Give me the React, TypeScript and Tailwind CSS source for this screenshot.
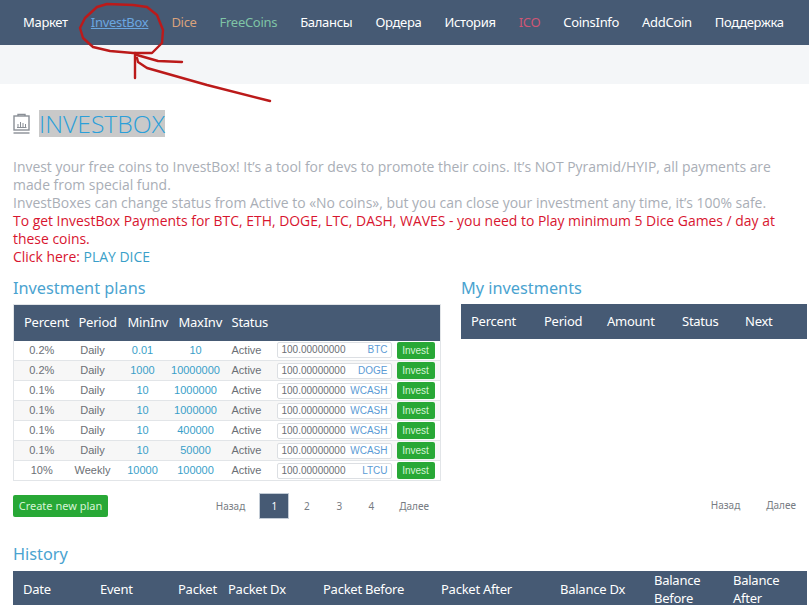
const ptFont = "font-['Noto_Sans',sans-serif]"

const navItems = [
  { label: 'Маркет', color: 'text-white' },
  { label: 'InvestBox', color: 'text-[#6aa6e0] underline' },
  { label: 'Dice', color: 'text-[#d9a27c]' },
  { label: 'FreeCoins', color: 'text-[#7fc4a6]' },
  { label: 'Балансы', color: 'text-white' },
  { label: 'Ордера', color: 'text-white' },
  { label: 'История', color: 'text-white' },
  { label: 'ICO', color: 'text-[#cf5674]' },
  { label: 'CoinsInfo', color: 'text-white' },
  { label: 'AddCoin', color: 'text-white' },
  { label: 'Поддержка', color: 'text-white' },
]

const plans = [
  { percent: '0.2%', period: 'Daily', min: '0.01', max: '10', coin: 'BTC' },
  { percent: '0.2%', period: 'Daily', min: '1000', max: '10000000', coin: 'DOGE' },
  { percent: '0.1%', period: 'Daily', min: '10', max: '1000000', coin: 'WCASH' },
  { percent: '0.1%', period: 'Daily', min: '10', max: '1000000', coin: 'WCASH' },
  { percent: '0.1%', period: 'Daily', min: '10', max: '400000', coin: 'WCASH' },
  { percent: '0.1%', period: 'Daily', min: '10', max: '50000', coin: 'WCASH' },
  { percent: '10%', period: 'Weekly', min: '10000', max: '100000', coin: 'LTCU' },
]

function SectionTitle({ children }: { children: string }) {
  return <h2 className={`${ptFont} text-[16.3px] leading-[24px] text-[#4aa3d0]`}>{children}</h2>
}

function Annotation() {
  return (
    <svg className="absolute left-0 top-0 pointer-events-none" width="300" height="110" viewBox="0 0 300 110" fill="none">
      <g stroke="#bb1a1a" strokeWidth="2.4" strokeLinecap="round" strokeLinejoin="round">
        <path d="M97 7 L107 4 L133 5 L147 7 L157 15 L163 30 L162 43 L152 53 L133 53 L110 51 L93 47 L83 38 L80 28 L85 18 Z" />
        <path d="M135 53 L135 78" />
        <path d="M137 55 L158 61 L182 62" />
        <path d="M137 58 L138 62 L147 68 L207 85 L270 101" />
      </g>
    </svg>
  )
}

export default function App() {
  return (
    <div className="relative h-[605px] w-[809px] overflow-hidden bg-white font-['Open_Sans',sans-serif]">
      <nav className={`${ptFont} flex h-[45px] items-center bg-[#465a74] pl-[11.5px] text-[13px] tracking-[-0.3px]`}>
        {navItems.map((item) => (
          <a key={item.label} className={`px-[11.5px] whitespace-nowrap ${item.color}`}>
            {item.label}
          </a>
        ))}
      </nav>
      <div className="h-[39px] bg-[#f4f6f8]" />

      <main className="pl-[13px]">
        <div className="mt-[26px] flex items-center gap-[9px]">
          <svg width="17" height="21" viewBox="0 0 17 21" fill="none" stroke="#8a8f96" strokeWidth="1.4">
            <rect x="1" y="3" width="15" height="14" />
            <path d="M5 3 V1.5 H12 V3" />
            <path d="M0.5 20 H16.5" />
            <path d="M5 14 V11 M7.5 14 V9 M10 14 V10 M12.5 14 V11 M4 14.5 H13.5" strokeWidth="1" />
          </svg>
          <h1 className="h-[27px] bg-[#c9c9c9] text-[24.7px] font-light leading-[27px] text-[#2b9fd9]">INVESTBOX</h1>
        </div>

        <div className="mt-[21px] w-[785px] text-[13.93px] leading-[18px] text-[#a9aeb6]">
          <p>
            Invest your free coins to InvestBox! It’s a tool for devs to promote their coins. It’s NOT Pyramid/HYIP, all payments are
            made from special fund.
          </p>
          <p>InvestBoxes can change status from Active to «No coins», but you can close your investment any time, it’s 100% safe.</p>
          <p className="text-[#d8152f]">
            To get InvestBox Payments for BTC, ETH, DOGE, LTC, DASH, WAVES - you need to Play minimum 5 Dice Games / day at these coins.
          </p>
          <p className="text-[#d8152f]">
            Click here: <a className="text-[#3a9fc9]">PLAY DICE</a>
          </p>
        </div>

        <div className="mt-[10px] flex gap-[21px]">
          <section className="w-[428px] shrink-0">
            <SectionTitle>Investment plans</SectionTitle>
            <table className="mt-[4px] w-full table-fixed border border-[#e2e5e8] font-['Liberation_Sans',sans-serif] text-[11px]">
              <colgroup>
                <col className="w-[56px]" />
                <col className="w-[46px]" />
                <col className="w-[54px]" />
                <col className="w-[52px]" />
                <col className="w-[50px]" />
                <col className="w-[122px]" />
                <col />
              </colgroup>
              <thead>
                <tr className={`${ptFont} h-[36px] bg-[#465a74] text-left text-[13px] font-normal tracking-[-0.25px] text-white`}>
                  <th className="pl-[10px] font-normal">Percent</th>
                  <th className="pl-[9px] font-normal whitespace-nowrap">Period</th>
                  <th className="pl-[12px] font-normal whitespace-nowrap">MinInv</th>
                  <th className="pl-[9px] font-normal whitespace-nowrap">MaxInv</th>
                  <th className="pl-[10px] font-normal whitespace-nowrap">Status</th>
                  <th />
                  <th />
                </tr>
              </thead>
              <tbody>
                {plans.map((plan, i) => (
                  <tr key={i} className={`h-[20px] border-b border-[#e2e5e8] text-center text-[#6b6f75] ${i % 2 === 1 ? 'bg-[#f7f7f7]' : 'bg-white'}`}>
                    <td>{plan.percent}</td>
                    <td>{plan.period}</td>
                    <td className="text-[#3a9fc9]">{plan.min}</td>
                    <td className="text-[#3a9fc9]">{plan.max}</td>
                    <td className="pl-[10px] text-left">Active</td>
                    <td className="pl-[5px]">
                      <div className="flex h-[16px] w-[115px] items-center justify-between rounded-[2px] border border-[#dcdfe3] bg-white pl-[4px] pr-[3px] text-[10px] leading-none">
                        <span>100.00000000</span>
                        <span className="text-[#5b9bd5]">{plan.coin}</span>
                      </div>
                    </td>
                    <td className="pl-[3px]">
                      <button className="flex h-[17px] w-[38px] items-center justify-center rounded-[2px] bg-[#28a836] text-[10px] text-[#d6f5d6]">Invest</button>
                    </td>
                  </tr>
                ))}
              </tbody>
            </table>

            <div className="mt-[12px] flex items-center justify-between">
              <button className={`${ptFont} h-[22px] w-[95px] rounded-[2px] bg-[#28a836] text-[11px] text-[#d6f5d6]`}>Create new plan</button>
              <div className={`${ptFont} mr-[12px] flex items-center text-[10px] text-[#777c83]`}>
                <span className="mr-[14px]">Назад</span>
                <span className="flex h-[26px] w-[30px] items-center justify-center border border-[#c3ccd6] bg-[#465a74] text-white">1</span>
                <span className="w-[35px] text-center">2</span>
                <span className="w-[30px] text-center">3</span>
                <span className="w-[34px] text-center">4</span>
                <span className="ml-[11px]">Далее</span>
              </div>
            </div>
          </section>

          <section className="-ml-[1px] w-[346px] shrink-0">
            <SectionTitle>My investments</SectionTitle>
            <div className={`${ptFont} mt-[4px] grid h-[35px] grid-cols-[73px_63px_75px_63px_1fr] items-center bg-[#465a74] pl-[10px] text-[13px] tracking-[-0.25px] text-white`}>
              <span>Percent</span>
              <span>Period</span>
              <span>Amount</span>
              <span>Status</span>
              <span>Next</span>
            </div>
            <div className={`${ptFont} mt-[159px] flex justify-end gap-[26px] pr-[11px] text-[10px] text-[#777c83]`}>
              <span>Назад</span>
              <span>Далее</span>
            </div>
          </section>
        </div>

        <section className="mt-[23px]">
          <SectionTitle>History</SectionTitle>
          <div className={`${ptFont} mt-[5px] grid h-[34px] w-[794px] grid-cols-[77px_78px_50px_95px_118px_119px_94px_79px_1fr] items-center bg-[#465a74] pl-[10px] text-[13px] leading-[18px] tracking-[-0.25px] text-white`}>
            <span>Date</span>
            <span>Event</span>
            <span>Packet</span>
            <span>Packet Dx</span>
            <span>Packet Before</span>
            <span>Packet After</span>
            <span>Balance Dx</span>
            <span>Balance Before</span>
            <span>Balance After</span>
          </div>
        </section>
      </main>

      <Annotation />
    </div>
  )
}
